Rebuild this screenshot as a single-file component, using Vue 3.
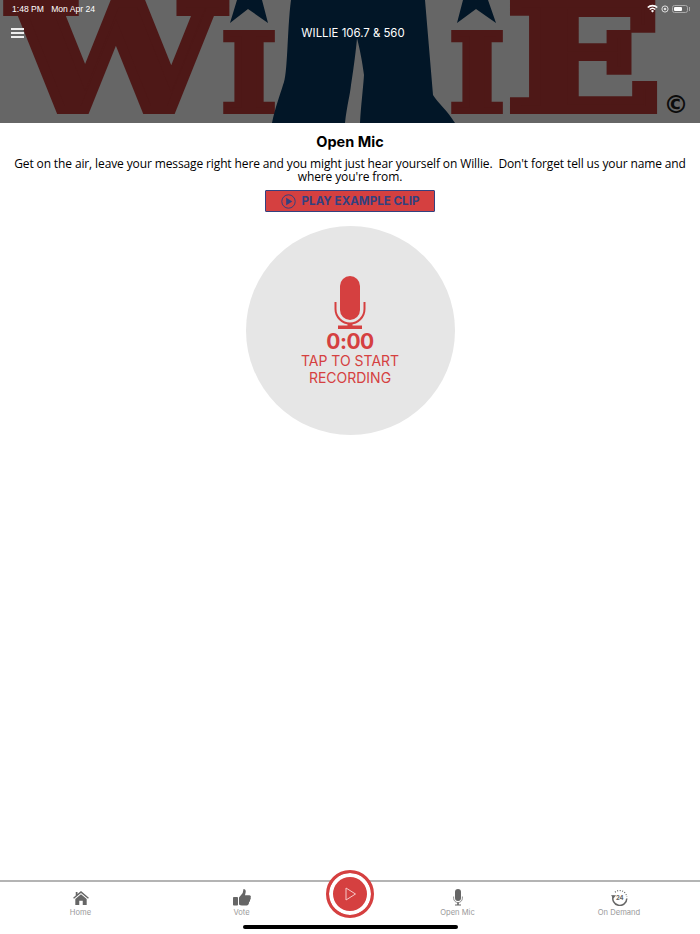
<script setup>
const tabs = [
  { label: 'Home', icon: 'home' },
  { label: 'Vote', icon: 'vote' },
  { label: 'Open Mic', icon: 'mic' },
  { label: 'On Demand', icon: 'demand' },
]
</script>

<template>
  <div class="page">
    <header class="hero">
      <svg class="logo" viewBox="0 0 700 123" preserveAspectRatio="none" aria-hidden="true">
        <text class="slab" x="10" y="110" textLength="212" lengthAdjust="spacingAndGlyphs" font-size="146">W</text>
        <text class="slab thin" x="221" y="111" textLength="56" lengthAdjust="spacingAndGlyphs" font-size="106">I</text>
        <text class="slab thin" x="449" y="111" textLength="56" lengthAdjust="spacingAndGlyphs" font-size="106">I</text>
        <text class="slab" x="506" y="110" textLength="156" lengthAdjust="spacingAndGlyphs" font-size="146">E</text>
        <path class="navy" d="M291 0H425L433 95C438 103 447 110 455 123H272C275 108 280 95 283 85 288 75 287 30 291 0Z" />
        <path class="gap" d="M345 123C347 105 350 95 351 85 354 65 356 50 357 38 360 50 362 60 364 75 363 90 361 105 360 123Z" />
        <path class="navy" d="M237 0H262L268 23 248 9 230 23Z" />
        <path class="navy" d="M463 0H488L496 23 476 9 457 23Z" />
        <text class="copy" x="676" y="113" text-anchor="middle">©</text>
      </svg>
      <div class="status">
        <span>1:48 PM&nbsp;&nbsp; Mon Apr 24</span>
        <span class="status-icons">
          <svg width="11" height="9" viewBox="0 0 11 9"><path d="M.2 3A7.6 7.6 0 0 1 10.8 3L9.7 4.1A6 6 0 0 0 1.3 4.1ZM2.2 5A4.8 4.8 0 0 1 8.8 5L7.7 6.1A3.2 3.2 0 0 0 3.3 6.1ZM4 6.9A2 2 0 0 1 7 6.9L5.5 8.6Z" fill="#fff"/></svg>
          <svg width="8" height="8" viewBox="0 0 8 8"><circle cx="4" cy="4" r="3.1" fill="none" stroke="#ddd" stroke-width="1"/><circle cx="4" cy="4" r="1.3" fill="#ddd"/></svg>
          <span class="battery"><span class="battery-fill"></span></span>
        </span>
      </div>
      <div class="nav">
        <span class="burger"><i></i><i></i><i></i></span>
        <span class="station">WILLIE 106.7 &amp; 560</span>
      </div>
    </header>

    <main class="content">
      <h1>Open Mic</h1>
      <p>Get on the air, leave your message right here and you might just hear yourself on Willie.&nbsp; Don't forget tell us your name and where you're from.</p>
      <button class="clip">
        <svg width="15" height="15" viewBox="0 0 15 15"><circle cx="7.5" cy="7.5" r="6.7" fill="none" stroke="#33417f" stroke-width="1"/><path d="M5.2 3.8 11.4 7.5 5.2 11.2Z" fill="#33417f"/></svg>
        PLAY EXAMPLE CLIP
      </button>
      <div class="record">
        <svg width="32" height="54" viewBox="0 0 32 54">
          <rect x="6" y="0" width="20" height="44" rx="10" fill="#d54040"/>
          <path d="M1.5 26V33A14.5 14.5 0 0 0 30.5 33V26" fill="none" stroke="#d54040" stroke-width="2"/>
          <path d="M13.5 47H18.5V50H13.5ZM4 49.5H28V53H4Z" fill="#d54040"/>
        </svg>
        <div class="time">0:00</div>
        <div class="tap">TAP TO START<br>RECORDING</div>
      </div>
    </main>

    <nav class="tabbar">
      <div v-for="(t, i) in tabs" :key="t.label" class="tab" :class="'tab-' + i">
        <span class="ico">
          <svg v-if="t.icon === 'home'" width="16" height="14" viewBox="0 0 18 16"><path d="M9 0 18 7.6 17 8.8 9 2.2 1 8.8 0 7.6 3 5V1H5V3.3Z" fill="#666"/><path d="M9 3.6 15.5 9V16H11V11H7V16H2.5V9Z" fill="#666"/></svg>
          <svg v-else-if="t.icon === 'vote'" width="18" height="17" viewBox="0 0 18 17"><rect x="0" y="8" width="5" height="8.5" rx=".8" fill="#666"/><path d="M6 8.5 9.7 4 10.5 0C12.6 0 13 1.7 12.6 3.5L12 6.2H16.4C17.8 6.2 18.2 7.7 17.6 8.6 18 9.6 17.7 10.5 17 11 17.2 12 16.8 12.9 16 13.3 16.1 15 15.2 16.5 13.6 16.5H9C7.8 16.5 6.8 16 6 15.4Z" fill="#666"/></svg>
          <svg v-else-if="t.icon === 'mic'" width="10" height="17" viewBox="0 0 10 17"><rect x="2" y="0" width="6" height="12" rx="3" fill="#666"/><path d="M.6 7.5V9.2A4.4 4.4 0 0 0 9.4 9.2V7.5" fill="none" stroke="#888" stroke-width=".9"/><path d="M4.2 13.4H5.8V15.4H8V16.6H2V15.4H4.2Z" fill="#666"/></svg>
          <svg v-else width="17" height="17" viewBox="0 0 17 17">
            <path d="M2.4 6.6A7 7 0 1 0 15.8 9.5" fill="none" stroke="#666" stroke-width="1.5"/>
            <path d="M0 6.2H5L2.5 9.4Z" fill="#666"/>
            <path d="M4 3.2A7.2 7.2 0 0 1 15.8 8" fill="none" stroke="#666" stroke-width="1.2" stroke-dasharray="1 1.5"/>
            <text x="8.8" y="11" text-anchor="middle" class="t24">24</text>
          </svg>
        </span>
        <span>{{ t.label }}</span>
      </div>
      <div class="player">
        <svg width="13" height="14" viewBox="0 0 13 14"><path d="M2 1 11.5 7 2 13Z" fill="none" stroke="#f6c9c9" stroke-width="1"/></svg>
      </div>
      <div class="home-bar"></div>
    </nav>
  </div>
</template>

<style>
html, body { margin: 0; background: #fff; }
</style>

<style scoped>
.page {
  width: 700px;
  height: 934px;
  display: flex;
  flex-direction: column;
  font-family: "Inter", "Open Sans", sans-serif;
  background: #fff;
  overflow: hidden;
}
.hero {
  position: relative;
  height: 123px;
  background: #666;
  color: #fff;
  flex: none;
  overflow: hidden;
}
.logo { position: absolute; inset: 0; width: 700px; height: 123px; }
.slab {
  font-family: "DejaVu Serif", serif;
  font-weight: 700;
  fill: #4e1817;
  stroke: #4e1817;
  stroke-width: 8px;
  stroke-linejoin: miter;
}
.thin { stroke-width: 6px; }
.navy { fill: #021627; }
.gap { fill: #666; }
.copy { font-family: "DejaVu Sans", sans-serif; font-size: 25px; font-weight: 700; fill: #0c0c0c; }
.status {
  position: relative;
  display: flex;
  justify-content: space-between;
  align-items: center;
  padding: 2px 12px 0 12px;
  height: 13px;
  font-size: 8.6px;
  font-family: "Liberation Sans", sans-serif;
}
.status-icons { display: flex; align-items: center; gap: 3px; }
.battery {
  position: relative;
  width: 16px; height: 8px; border: 1px solid #aaa; border-radius: 2.5px;
  padding: 1px; box-sizing: border-box; display: flex;
}
.battery::after {
  content: "";
  position: absolute;
  right: -3px;
  top: 1px;
  width: 1px;
  height: 4px;
  background: #aaa;
}
.battery-fill { width: 8px; background: #fff; border-radius: 1px; }
.nav { position: relative; height: 36px; display: flex; align-items: center; justify-content: center; }
.burger { position: absolute; left: 11px; top: 13px; width: 13px; display: flex; flex-direction: column; gap: 2px; }
.burger i { display: block; height: 2px; background: #eee; }
.station { font-size: 11.4px; margin-left: 6px; }
.content {
  flex: 1;
  display: flex;
  flex-direction: column;
  align-items: center;
  padding: 10px 12px 0;
  text-align: center;
  color: #000;
}
h1 { margin: 0; font-size: 14.5px; line-height: 18px; font-weight: 700; }
p { margin: 6px 0 0; font-family: "Open Sans", sans-serif; font-size: 12px; letter-spacing: -0.12px; line-height: 13px; }
.clip {
  margin-top: 7px;
  width: 170px;
  height: 22px;
  background: #d54040;
  border: 1px solid #33417f;
  border-radius: 1px;
  color: #33417f;
  font: 700 11.6px "Inter", sans-serif;
  display: flex;
  align-items: center;
  justify-content: center;
  gap: 6px;
  padding: 0;
}
.record {
  margin-top: 14px;
  width: 209px;
  height: 209px;
  border-radius: 50%;
  background: #e6e6e6;
  display: flex;
  flex-direction: column;
  align-items: center;
  padding-top: 50px;
  box-sizing: border-box;
  color: #d54040;
}
.time { font-size: 21px; font-weight: 700; letter-spacing: -0.5px; line-height: 24px; margin-top: 0; }
.tap { font-size: 14px; line-height: 17px; margin-top: -2px; }
.tabbar {
  position: relative;
  flex: none;
  height: 52px;
  border-top: 2px solid #b4b4b4;
  display: grid;
  grid-template-columns: 161px 161px 55px 161px 162px;
}
.tab {
  display: flex;
  flex-direction: column;
  align-items: center;
  height: 38px;
  padding-top: 7px;
  gap: 2px;
  color: #999;
  font-size: 7.6px;
}
.tab-2 { grid-column: 4; }
.ico { height: 17px; display: flex; align-items: center; justify-content: center; }
.t24 { font: 700 6px "Inter", sans-serif; fill: #666; }
.player {
  position: absolute;
  left: 326px;
  top: -12px;
  width: 48px;
  height: 48px;
  box-sizing: border-box;
  border-radius: 50%;
  background: #d54040;
  border: 3px solid #d54040;
  box-shadow: inset 0 0 0 4px #fff;
  display: flex;
  align-items: center;
  justify-content: center;
}
.home-bar {
  position: absolute;
  left: 243px;
  bottom: 5px;
  width: 215px;
  height: 4px;
  border-radius: 2px;
  background: #000;
}
</style>
